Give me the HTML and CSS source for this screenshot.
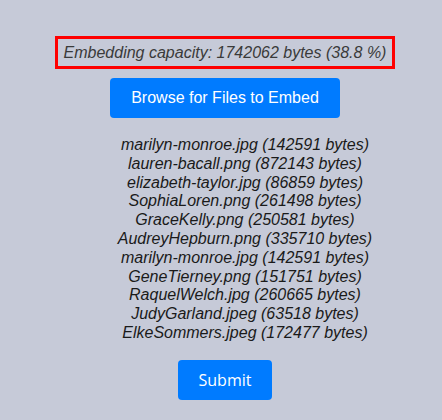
FILE: index.html
```html
<!DOCTYPE html>
<html>
<head>
<meta charset="utf-8">
<link rel="stylesheet" href="styles.css">
</head>
<body>
<main class="page">
  <div class="capacity">Embedding capacity: 1742062 bytes (38.8 %)</div>
  <button class="btn btn-browse">Browse for Files to Embed</button>
  <ul class="files">
    <li>marilyn-monroe.jpg (142591 bytes)</li>
    <li>lauren-bacall.png (872143 bytes)</li>
    <li>elizabeth-taylor.jpg (86859 bytes)</li>
    <li>SophiaLoren.png (261498 bytes)</li>
    <li>GraceKelly.png (250581 bytes)</li>
    <li>AudreyHepburn.png (335710 bytes)</li>
    <li>marilyn-monroe.jpg (142591 bytes)</li>
    <li>GeneTierney.png (151751 bytes)</li>
    <li>RaquelWelch.jpg (260665 bytes)</li>
    <li>JudyGarland.jpeg (63518 bytes)</li>
    <li>ElkeSommers.jpeg (172477 bytes)</li>
  </ul>
  <button class="btn btn-submit">Submit</button>
</main>
</body>
</html>
```
FILE: styles.css
```css
html, body {
  margin: 0;
  padding: 0;
  background: #c6cad8;
}
body {
  font-family: "Liberation Sans", Arial, sans-serif;
}
.page {
  margin-left: 8px;
  width: 434px;
  padding-top: 36px;
  display: flex;
  flex-direction: column;
  align-items: center;
}
.capacity {
  width: 340px;
  box-sizing: border-box;
  border: 3px solid #ff0000;
  height: 33px;
  display: flex;
  align-items: center;
  justify-content: center;
  font-style: italic;
  font-size: 16px;
  color: #3a3a3a;
}
.btn {
  background: #007bff;
  color: #fff;
  border: none;
  border-radius: 4px;
  height: 40px;
  font-size: 16px;
  font-family: "Liberation Sans", Arial, sans-serif;
  padding: 0;
}
.btn-browse {
  margin-top: 9px;
  width: 230px;
}
.files {
  list-style: none;
  margin: 18px 0 0 0;
  padding: 0 0 0 40px;
  font-style: italic;
  font-size: 16px;
  line-height: 18.8px;
  color: #1a1a1a;
  text-align: center;
}
.btn-submit {
  margin-top: 17px;
  width: 94px;
  font-family: "Open Sans", sans-serif;
}
```
